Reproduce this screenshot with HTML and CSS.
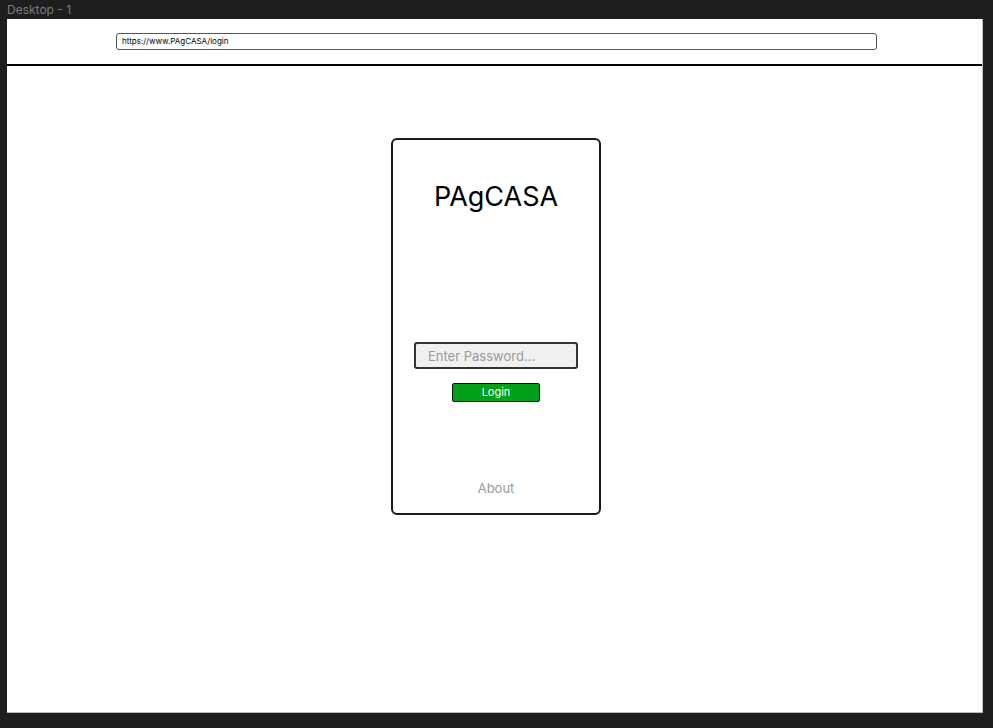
FILE: index.html
```html
<!DOCTYPE html>
<html lang="en">
<head>
<meta charset="utf-8">
<title>PAgCASA</title>
<link rel="stylesheet" href="styles.css">
</head>
<body>
<div class="label">Desktop - 1</div>
<div class="frame">
  <div class="browser-bar">
    <div class="url">https://www.PAgCASA/login</div>
  </div>
  <div class="page">
    <div class="card">
      <h1 class="title">PAgCASA</h1>
      <input class="password" type="password" placeholder="Enter Password...">
      <button class="login">Login</button>
      <a class="about">About</a>
    </div>
  </div>
</div>
</body>
</html>
```
FILE: styles.css
```css
html, body {
  margin: 0;
  padding: 0;
  background: #1e1e1e;
  font-family: Inter, "Noto Sans", sans-serif;
}
body {
  width: 993px;
  height: 728px;
  overflow: hidden;
}
.label {
  height: 19px;
  padding-left: 7px;
  font-size: 12px;
  line-height: 20px;
  color: #7c7c7c;
  box-sizing: border-box;
}
.frame {
  margin-left: 7px;
  width: 976px;
  height: 694px;
  background: #fff;
  box-sizing: border-box;
  border-right: 1px solid #bdbdbd;
  border-bottom: 1px solid #bdbdbd;
  display: flex;
  flex-direction: column;
}
.browser-bar {
  height: 47px;
  box-sizing: border-box;
  border-bottom: 2px solid #000;
  padding: 14px 0 0 109px;
}
.url {
  width: 761px;
  height: 17px;
  box-sizing: border-box;
  border: 1px solid #555;
  border-radius: 3px;
  font-size: 8px;
  line-height: 15px;
  padding-left: 5px;
  color: #000;
}
.page {
  flex: 1;
  padding: 72px 0 0 384px;
}
.card {
  width: 210px;
  height: 377px;
  box-sizing: border-box;
  border: 2px solid #1a1a1a;
  border-radius: 6px;
  display: flex;
  flex-direction: column;
  align-items: center;
  padding-top: 40px;
}
.title {
  margin: 0;
  font-size: 27px;
  line-height: 34px;
  font-weight: 400;
  color: #000;
}
.password {
  margin-top: 128px;
  width: 164px;
  height: 27px;
  box-sizing: border-box;
  border: 2px solid #333;
  border-radius: 3px;
  background: #f0f0f0;
  padding: 0 0 0 12px;
  font-family: inherit;
  font-size: 13px;
  outline: none;
}
.password::placeholder {
  color: #9a9a9a;
}
.login {
  margin-top: 14px;
  width: 88px;
  height: 19px;
  box-sizing: border-box;
  border: 1px solid #111;
  border-radius: 2px;
  background: #00a01a;
  color: #fff;
  font-family: inherit;
  font-size: 11px;
  line-height: 17px;
  padding: 0;
}
.about {
  margin-top: 78px;
  font-size: 13px;
  line-height: 16px;
  color: #999;
}
```
